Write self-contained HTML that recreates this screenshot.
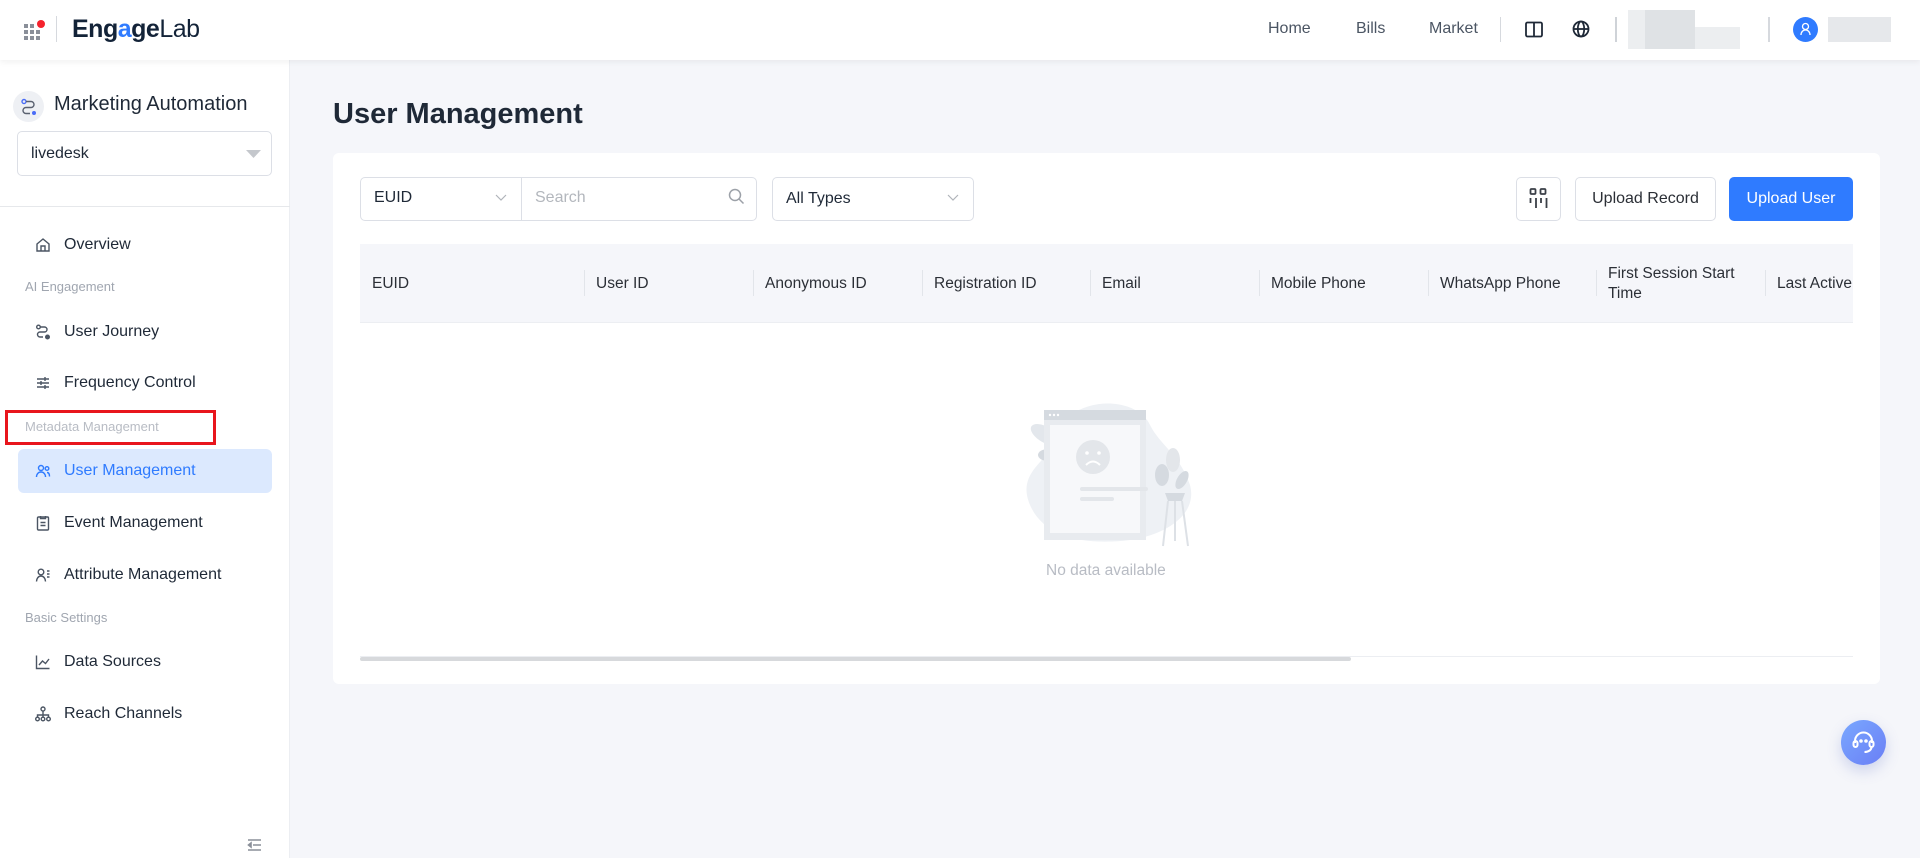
<!DOCTYPE html>
<html><head><meta charset="utf-8">
<style>
*{box-sizing:border-box;margin:0;padding:0}
body{width:1920px;height:858px;overflow:hidden;background:#f5f6fa;font-family:"Liberation Sans",Arial,sans-serif;color:#1f2937;position:relative}
.abs{position:absolute}
.hdr{left:0;top:0;width:1920px;height:60px;background:#fff;box-shadow:0 2px 6px rgba(0,0,0,.06);z-index:2}
.side{left:0;top:60px;width:290px;height:798px;background:#fff;border-right:1px solid #eceef2}
.nav{font-size:16px;color:#4b5563}
.item{left:0;width:290px;height:44px;font-size:16px;color:#1f2937;display:flex;align-items:center;padding-left:64px}
.item svg{position:absolute;left:35px;top:14px}
.grp{left:25px;font-size:13px;color:#a0a6b0}
.card{left:333px;top:153px;width:1547px;height:531px;background:#fff;border-radius:6px}
.box{border:1px solid #dcdfe6;border-radius:5px;background:#fff;height:44px;font-size:16px;display:flex;align-items:center}
.th{top:244px;height:79px;font-size:15.5px;color:#2b2f36;display:flex;align-items:center}
.dv{top:270px;width:1px;height:26px;background:#e2e5ea}
</style></head><body>
<div class="abs hdr">
  <svg class="abs" style="left:24px;top:20px" width="22" height="20" viewBox="0 0 22 20">
    <g fill="#8a8f99"><rect x="0" y="4" width="4" height="4"/><rect x="6" y="4" width="4" height="4"/><rect x="0" y="10" width="4" height="4"/><rect x="6" y="10" width="4" height="4"/><rect x="12" y="10" width="4" height="4"/><rect x="0" y="16" width="4" height="4"/><rect x="6" y="16" width="4" height="4"/><rect x="12" y="16" width="4" height="4"/></g>
    <circle cx="17" cy="4" r="4" fill="#f5222d"/></svg>
  <div class="abs" style="left:56px;top:16px;width:1px;height:26px;background:#d6d9de"></div>
  <div class="abs" style="left:72px;top:15px;font-size:25px;font-weight:bold;color:#132338;letter-spacing:-0.5px">Eng<span style="color:#2f7bff">a</span>ge<span style="font-weight:normal">Lab</span></div>
  <div class="abs nav" style="left:1268px;top:20px">Home</div>
  <div class="abs nav" style="left:1356px;top:20px">Bills</div>
  <div class="abs nav" style="left:1429px;top:20px">Market</div>
  <div class="abs" style="left:1500px;top:17px;width:1px;height:25px;background:#d6d9de"></div>
  <svg class="abs" style="left:1525px;top:21px" width="18" height="17" viewBox="0 0 18 17" fill="none" stroke="#1f2937" stroke-width="1.8"><rect x="1" y="1.5" width="16" height="14" rx="1.5"/><line x1="9" y1="1.5" x2="9" y2="15.5"/></svg>
  <svg class="abs" style="left:1572px;top:20px" width="18" height="18" viewBox="0 0 18 18" fill="none" stroke="#1f2937" stroke-width="1.8"><circle cx="9" cy="9" r="7.5"/><ellipse cx="9" cy="9" rx="3.2" ry="7.5"/><line x1="1.5" y1="9" x2="16.5" y2="9"/></svg>
  <div class="abs" style="left:1615px;top:17px;width:2px;height:25px;background:#cfd3d8"></div>
  <div class="abs" style="left:1628px;top:10px;width:17px;height:39px;background:#eceef0"></div>
  <div class="abs" style="left:1645px;top:10px;width:50px;height:39px;background:#dfe2e5"></div>
  <div class="abs" style="left:1695px;top:27px;width:45px;height:22px;background:#eceef0"></div>
  <div class="abs" style="left:1768px;top:17px;width:2px;height:25px;background:#d6d9de"></div>
  <div class="abs" style="left:1793px;top:17px;width:25px;height:25px;border-radius:50%;background:#2f7bff"></div>
  <svg class="abs" style="left:1799px;top:22px" width="13" height="14" viewBox="0 0 13 14" fill="none" stroke="#fff" stroke-width="1.3"><circle cx="6.5" cy="4.5" r="3"/><path d="M2 13c0-3 2-5 4.5-5s4.5 2 4.5 5"/></svg>
  <div class="abs" style="left:1828px;top:17px;width:63px;height:25px;background:#e6e8eb"></div>
</div>

<div class="abs side">
  <div class="abs" style="left:13px;top:31px;width:31px;height:31px;border-radius:50%;background:#eef0f4"></div>
  <svg class="abs" style="left:20px;top:38px" width="18" height="18" viewBox="0 0 18 18" fill="none" stroke="#5a6170" stroke-width="1.4"><circle cx="4" cy="3.5" r="2" stroke="#4a6cf7"/><path d="M6 3.5h5a3 3 0 010 6H6a3 3 0 000 6h4"/><circle cx="14" cy="15" r="2" fill="#4a6cf7" stroke="none"/></svg>
  <div class="abs" style="left:54px;top:33px;font-size:20px;color:#1f2937">Marketing Automation</div>
  <div class="abs box" style="left:17px;top:71px;width:255px;height:45px;padding-left:13px;font-size:16px">livedesk</div>
  <svg class="abs" style="left:246px;top:90px" width="15" height="9"><path d="M0 0h15L7.5 8z" fill="#c4c7cc"/></svg>
  <div class="abs" style="left:0;top:146px;width:290px;height:1px;background:#e6e8eb"></div>

  <div class="abs item" style="top:163px"><svg width="16" height="16" viewBox="0 0 16 16" fill="none" stroke="#4b5563" stroke-width="1.4"><path d="M2 7l6-5 6 5v7H2z"/><path d="M6 14V9h4v5"/></svg>Overview</div>
  <div class="abs grp" style="top:219px">AI Engagement</div>
  <div class="abs item" style="top:250px"><svg width="16" height="16" viewBox="0 0 16 16" fill="none" stroke="#4b5563" stroke-width="1.4"><circle cx="3.5" cy="3" r="1.8"/><path d="M5.5 3h4a2.5 2.5 0 010 5H5a2.5 2.5 0 000 5h3"/><circle cx="12.5" cy="13" r="1.8" fill="#4b5563"/></svg>User Journey</div>
  <div class="abs item" style="top:301px"><svg width="16" height="16" viewBox="0 0 16 16" fill="none" stroke="#4b5563" stroke-width="1.4"><path d="M2 4h12M2 8h12M2 12h12M10 2v4M6 6v4M10 10v4"/></svg>Frequency Control</div>
  <div class="abs" style="left:5px;top:350px;width:211px;height:35px;border:3px solid #e8151d"></div>
  <div class="abs grp" style="top:359px;color:#b8bcc4">Metadata Management</div>
  <div class="abs" style="left:18px;top:389px;width:254px;height:44px;background:#dce9fe;border-radius:6px"></div>
  <div class="abs item" style="top:389px;color:#2f7bff"><svg width="16" height="16" viewBox="0 0 16 16" fill="none" stroke="#2f7bff" stroke-width="1.4"><circle cx="6" cy="5" r="2.5"/><path d="M1.5 14c0-3 2-5 4.5-5s4.5 2 4.5 5"/><circle cx="12" cy="5.5" r="1.8"/><path d="M12 9.5c1.5 0 2.5 1.5 2.5 4"/></svg>User Management</div>
  <div class="abs item" style="top:441px"><svg width="16" height="16" viewBox="0 0 16 16" fill="none" stroke="#4b5563" stroke-width="1.4"><rect x="2.5" y="2" width="11" height="13" rx="1"/><path d="M5.5 1v2.5h5V1M5.5 7.5h5M5.5 10.5h5"/></svg>Event Management</div>
  <div class="abs item" style="top:493px"><svg width="16" height="16" viewBox="0 0 16 16" fill="none" stroke="#4b5563" stroke-width="1.4"><circle cx="6" cy="5" r="2.8"/><path d="M1.5 14.5c0-3 2-5.5 4.5-5.5s4.5 2.5 4.5 5.5M12 4h2.5M12 7h2.5M12 10h2.5"/></svg>Attribute Management</div>
  <div class="abs grp" style="top:550px">Basic Settings</div>
  <div class="abs item" style="top:580px"><svg width="16" height="16" viewBox="0 0 16 16" fill="none" stroke="#4b5563" stroke-width="1.4"><path d="M1.5 1.5v13h13M4 11l3.5-4 3 2.5L14 5"/></svg>Data Sources</div>
  <div class="abs item" style="top:632px"><svg width="16" height="16" viewBox="0 0 16 16" fill="none" stroke="#4b5563" stroke-width="1.4"><circle cx="8" cy="3" r="2"/><circle cx="2.5" cy="13" r="1.8"/><circle cx="8" cy="13" r="1.8"/><circle cx="13.5" cy="13" r="1.8"/><path d="M8 5v6M2.5 11V9h11v2"/></svg>Reach Channels</div>
  <svg class="abs" style="left:247px;top:779px" width="15" height="12" viewBox="0 0 15 12" stroke="#8a8f99" stroke-width="1.6" fill="none"><path d="M1 1h13M6 6h8M1 11h13"/><path d="M4 4L1.5 6 4 8z" fill="#8a8f99"/></svg>
</div>

<div class="abs" style="left:333px;top:98px;font-size:29px;font-weight:bold;color:#1f2937">User Management</div>

<div class="abs card"></div>
<div class="abs box" style="left:360px;top:177px;width:397px;"></div>
<div class="abs" style="left:521px;top:178px;width:1px;height:42px;background:#dcdfe6"></div>
<div class="abs" style="left:374px;top:189px;font-size:16px">EUID</div>
<svg class="abs" style="left:495px;top:194px" width="12" height="8"><path d="M1 1l5 5 5-5" stroke="#b0b4ba" fill="none" stroke-width="1.2"/></svg>
<div class="abs" style="left:535px;top:189px;font-size:16px;color:#b3b7bd">Search</div>
<svg class="abs" style="left:728px;top:188px" width="17" height="17" viewBox="0 0 17 17" fill="none" stroke="#9ca1a8" stroke-width="1.5"><circle cx="7" cy="7" r="5.5"/><path d="M11 11l4.5 4.5"/></svg>
<div class="abs box" style="left:772px;top:177px;width:202px;padding-left:13px">All Types</div>
<svg class="abs" style="left:947px;top:194px" width="12" height="8"><path d="M1 1l5 5 5-5" stroke="#b0b4ba" fill="none" stroke-width="1.2"/></svg>

<div class="abs box" style="left:1516px;top:177px;width:45px"></div>
<svg class="abs" style="left:1529px;top:188px" width="19" height="22" viewBox="0 0 19 22" fill="none" stroke="#3a3f47" stroke-width="1.8"><rect x="1.5" y="1" width="5" height="5" rx="1"/><rect x="11.5" y="1" width="5" height="5" rx="1"/><path d="M1.5 10v5M7 10v10M12 10v5M17.5 10v10"/></svg>
<div class="abs box" style="left:1575px;top:177px;width:141px;justify-content:center;color:#2b2f36">Upload Record</div>
<div class="abs" style="left:1729px;top:177px;width:124px;height:44px;border-radius:5px;background:#2f7bff;color:#fff;font-size:16px;display:flex;align-items:center;justify-content:center">Upload User</div>

<div class="abs" style="left:360px;top:244px;width:1493px;height:79px;background:#f5f6fa;border-bottom:1px solid #eceef2"></div>
<div class="abs th" style="left:372px">EUID</div>
<div class="abs dv" style="left:584px"></div><div class="abs th" style="left:596px">User ID</div>
<div class="abs dv" style="left:753px"></div><div class="abs th" style="left:765px">Anonymous ID</div>
<div class="abs dv" style="left:922px"></div><div class="abs th" style="left:934px">Registration ID</div>
<div class="abs dv" style="left:1090px"></div><div class="abs th" style="left:1102px">Email</div>
<div class="abs dv" style="left:1259px"></div><div class="abs th" style="left:1271px">Mobile Phone</div>
<div class="abs dv" style="left:1428px"></div><div class="abs th" style="left:1440px">WhatsApp Phone</div>
<div class="abs dv" style="left:1596px"></div><div class="abs th" style="left:1608px;line-height:20px">First Session Start<br>Time</div>
<div class="abs dv" style="left:1765px"></div><div class="abs th" style="left:1777px;width:76px;overflow:hidden;white-space:nowrap">Last Active Time</div>

<svg class="abs" style="left:1010px;top:395px" width="200" height="160" viewBox="0 0 200 160">
  <path d="M60 20c30-20 70-12 80 10 10 20 30 30 40 60 8 30-25 50-60 55-40 5-85 0-100-35-12-28 10-40 20-55 5-15 5-25 20-35z" fill="#eef1f5"/>
  <ellipse cx="36" cy="40" rx="17" ry="8" transform="rotate(30 36 40)" fill="#e3e7ec"/>
  <ellipse cx="38" cy="60" rx="10" ry="6" fill="#d5dae0"/>
  <rect x="34" y="15" width="102" height="130" fill="#e8ebef"/>
  <rect x="34" y="15" width="102" height="10" fill="#d5dae0"/>
  <circle cx="40" cy="20" r="1.2" fill="#fff"/><circle cx="44" cy="20" r="1.2" fill="#fff"/><circle cx="48" cy="20" r="1.2" fill="#fff"/>
  <rect x="40" y="30" width="90" height="108" fill="#f7f8fa"/>
  <circle cx="83" cy="62" r="17" fill="#e3e6ea"/>
  <circle cx="77" cy="58" r="1.8" fill="#fff"/><circle cx="89" cy="58" r="1.8" fill="#fff"/>
  <path d="M76 70q7-7 14 0" stroke="#fff" stroke-width="2" fill="none"/>
  <rect x="70" y="92" width="68" height="4" rx="2" fill="#e3e6ea"/>
  <rect x="70" y="102" width="34" height="4" rx="2" fill="#e3e6ea"/>
  <ellipse cx="163" cy="65" rx="7" ry="12" fill="#e3e6ea"/>
  <ellipse cx="152" cy="80" rx="7" ry="11" fill="#d5dae0"/>
  <ellipse cx="172" cy="85" rx="5" ry="10" transform="rotate(30 172 85)" fill="#d5dae0"/>
  <path d="M155 98h20l-3 8h-14z" fill="#d5dae0"/>
  <path d="M158 106l-5 45M172 106l6 45M165 106v40" stroke="#dde1e6" stroke-width="2"/>
</svg>
<div class="abs" style="left:1046px;top:562px;font-size:15.5px;color:#b8bcc4">No data available</div>

<div class="abs" style="left:360px;top:656px;width:1493px;height:1px;background:#eceef2"></div>
<div class="abs" style="left:360px;top:657px;width:991px;height:4px;background:#d7d9dc;border-radius:2px"></div>

<div class="abs" style="left:1841px;top:720px;width:45px;height:45px;border-radius:50%;background:linear-gradient(135deg,#7aa8ff,#6a7ef5);box-shadow:0 6px 14px rgba(90,110,200,.25)"></div>
<svg class="abs" style="left:1850px;top:729px" width="27" height="27" viewBox="0 0 27 27" fill="none" stroke="#fff" stroke-width="2"><path d="M5 14v-2a8.5 8.5 0 0117 0v2"/><rect x="3.5" y="12" width="4" height="6" rx="2"/><rect x="19.5" y="12" width="4" height="6" rx="2"/><path d="M21.5 18c0 3-3 5-7 5"/><circle cx="11" cy="12" r=".8" fill="#fff"/><circle cx="16" cy="12" r=".8" fill="#fff"/></svg>
</body></html>
